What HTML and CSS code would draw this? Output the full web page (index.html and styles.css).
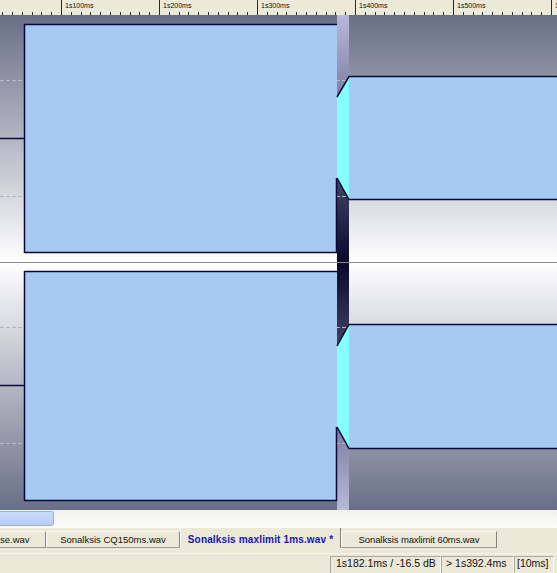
FILE: index.html
```html
<!DOCTYPE html>
<html lang="en">
<head>
<meta charset="utf-8">
<title>Waveform</title>
<link rel="stylesheet" href="styles.css">
</head>
<body>
<div class="app">
  <div class="ruler">
    <svg class="ruler-svg" width="557" height="15" viewBox="0 0 557 15">
      <path class="ticks" d="M2.5 12V15M12.5 12V15M22.5 12V15M32.5 12V15M41.5 12V15M51.5 12V15M71.5 12V15M81.5 12V15M90.5 12V15M100.5 12V15M110.5 12V15M120.5 12V15M130.5 12V15M139.5 12V15M149.5 12V15M169.5 12V15M179.5 12V15M188.5 12V15M198.5 12V15M208.5 12V15M218.5 12V15M228.5 12V15M237.5 12V15M247.5 12V15M267.5 12V15M277.5 12V15M286.5 12V15M296.5 12V15M306.5 12V15M316.5 12V15M326.5 12V15M335.5 12V15M345.5 12V15M365.5 12V15M375.5 12V15M384.5 12V15M394.5 12V15M404.5 12V15M414.5 12V15M424.5 12V15M433.5 12V15M443.5 12V15M463.5 12V15M473.5 12V15M482.5 12V15M492.5 12V15M502.5 12V15M512.5 12V15M522.5 12V15M531.5 12V15M541.5 12V15"/>
      <path class="majors" d="M61.5 0V15M159.5 0V15M257.5 0V15M355.5 0V15M453.5 0V15M551.5 0V15"/>
      <text class="ruler-label" x="65" y="8">1s100ms</text>
      <text class="ruler-label" x="163" y="8">1s200ms</text>
      <text class="ruler-label" x="261" y="8">1s300ms</text>
      <text class="ruler-label" x="359" y="8">1s400ms</text>
      <text class="ruler-label" x="457" y="8">1s500ms</text>
      <text class="ruler-label" x="555" y="8">1s600ms</text>
    </svg>
  </div>

  <div class="wave">
    <svg class="wave-svg" width="557" height="495" viewBox="0 15 557 495">
      <defs>
        <linearGradient id="bg" gradientUnits="userSpaceOnUse" x1="0" y1="15" x2="0" y2="510">
          <stop offset="0" stop-color="#686e86"/>
          <stop offset="0.5" stop-color="#ffffff"/>
          <stop offset="1" stop-color="#686e86"/>
        </linearGradient>
        <linearGradient id="sel" gradientUnits="userSpaceOnUse" x1="0" y1="15" x2="0" y2="510">
          <stop offset="0" stop-color="#b8b8da"/>
          <stop offset="0.5" stop-color="#08082a"/>
          <stop offset="1" stop-color="#b8b8da"/>
        </linearGradient>
      </defs>
      <rect x="0" y="15" width="557" height="495" fill="url(#bg)"/>
      <rect x="337" y="15" width="12" height="495" fill="url(#sel)"/>
      <path class="grid" d="M0 80.5H557M0 196.5H557M0 327.5H557M0 443.5H557"/>
      <path class="center" d="M0 262.5H557"/>

      <!-- channel 1 -->
      <rect class="fill" x="24" y="24" width="313" height="229"/>
      <polygon class="sel-fill" points="337,97 349,76 349,200 337,178"/>
      <rect class="fill" x="349" y="76" width="208" height="124"/>
      <path class="trace" d="M0 138.5H24.5M24.5 24V253M24.5 24.5H337M24.5 252.5H336.5V178M337 97L349 76.5H557M337 178L349 199.5H557"/>

      <!-- channel 2 -->
      <rect class="fill" x="24" y="271" width="313" height="230"/>
      <polygon class="sel-fill" points="337,346 349,324 349,448 337,427"/>
      <rect class="fill" x="349" y="324" width="208" height="124"/>
      <path class="trace" d="M0 385.5H24.5M24.5 271V501M24.5 271.5H337M24.5 500.5H336.5V427M337 346L349 324.5H557M337 427L349 448.5H557"/>
    </svg>
  </div>

  <div class="hscroll"><div class="thumb"></div></div>

  <div class="tabs">
    <div class="tab tab-first">se.wav</div>
    <div class="tab tab-second">Sonalksis CQ150ms.wav</div>
    <div class="tab tab-active">Sonalksis maxlimit 1ms.wav *</div>
    <div class="tab tab-fourth">Sonalksis maxlimit 60ms.wav</div>
  </div>

  <div class="status">
    <div class="panel panel-pos">1s182.1ms / -16.5 dB</div>
    <div class="panel panel-sel">&gt; 1s392.4ms</div>
    <div class="panel panel-zoom">[10ms]</div>
    <div class="grip"></div>
  </div>
</div>
</body>
</html>
```

FILE: styles.css
```css
* { box-sizing: border-box; }

html, body {
  margin: 0;
  padding: 0;
}

body {
  width: 557px;
  height: 573px;
  overflow: hidden;
  background: #ece9d8;
  font-family: "Liberation Sans", Arial, sans-serif;
  color: #000;
}

.app {
  display: flex;
  flex-direction: column;
  width: 557px;
  height: 573px;
}

/* ruler */
.ruler {
  flex: none;
  height: 15px;
  background: #ece9d8;
}

.ruler-svg,
.wave-svg {
  display: block;
}

.ticks,
.majors {
  stroke: #2a2a2a;
  stroke-width: 1;
  fill: none;
}

.ruler-label {
  font-family: "Liberation Sans", Arial, sans-serif;
  font-size: 7px;
  fill: #111;
}

/* waveform */
.wave {
  flex: none;
  height: 495px;
}

.grid {
  stroke: #b6b8c4;
  stroke-width: 1;
  stroke-dasharray: 4 2;
  fill: none;
}

.center {
  stroke: #8a8a8a;
  stroke-width: 1;
  fill: none;
}

.fill {
  fill: #a6caf2;
}

.sel-fill {
  fill: #86ffff;
}

.trace {
  stroke: #0a0a3a;
  stroke-width: 1.5;
  fill: none;
}

/* horizontal scroller */
.hscroll {
  flex: none;
  height: 18px;
  padding-top: 1px;
  background: linear-gradient(#f0f0ed, #fdfdfc);
}

.thumb {
  width: 54px;
  height: 15px;
  background: linear-gradient(#cbdcfc, #b8ccf5);
  border: 1px solid #97b1e4;
  border-left: none;
  border-radius: 0 3px 3px 0;
}

/* tabs */
.tabs {
  flex: none;
  height: 25px;
  display: flex;
  align-items: flex-start;
  padding-top: 3px;
  background: #ece9d8;
}

.tab {
  flex: none;
  height: 17px;
  border-top: 1px solid #fbfaf6;
  border-left: 1px solid #fff;
  border-right: 1px solid #85837a;
  border-bottom: 1px solid #9d9a8c;
  background: #ece9d8;
  font-size: 9.5px;
  line-height: 15px;
  text-align: center;
  white-space: nowrap;
  overflow: hidden;
  color: #111;
}

.tab-first {
  width: 46px;
  border-left: none;
  text-align: right;
  padding-right: 19px;
}

.tab-second {
  width: 134px;
}

.tab-active {
  width: 161px;
  height: 20px;
  margin-top: -3px;
  padding-top: 4px;
  border-top: none;
  border-bottom: none;
  font-size: 10px;
  font-weight: bold;
  letter-spacing: 0.15px;
  color: #1616b4;
}

.tab-fourth {
  width: 156px;
  letter-spacing: -0.1px;
}

/* status bar */
.status {
  flex: none;
  height: 20px;
  display: flex;
  justify-content: flex-end;
  align-items: stretch;
  padding-top: 2px;
  background: #ece9d8;
  border-top: 1px solid #f6f5ee;
}

.panel {
  flex: none;
  border-left: 1px solid #aca899;
  border-top: 1px solid #aca899;
  border-right: 1px solid #fff;
  padding-left: 5px;
  font-size: 10.5px;
  line-height: 12px;
  white-space: nowrap;
  color: #111;
}

.panel-pos { width: 111px; }
.panel-sel { width: 73px; padding-left: 4px; }
.panel-zoom { width: 40px; padding-left: 2px; }

.grip {
  flex: none;
  width: 3px;
}
```
